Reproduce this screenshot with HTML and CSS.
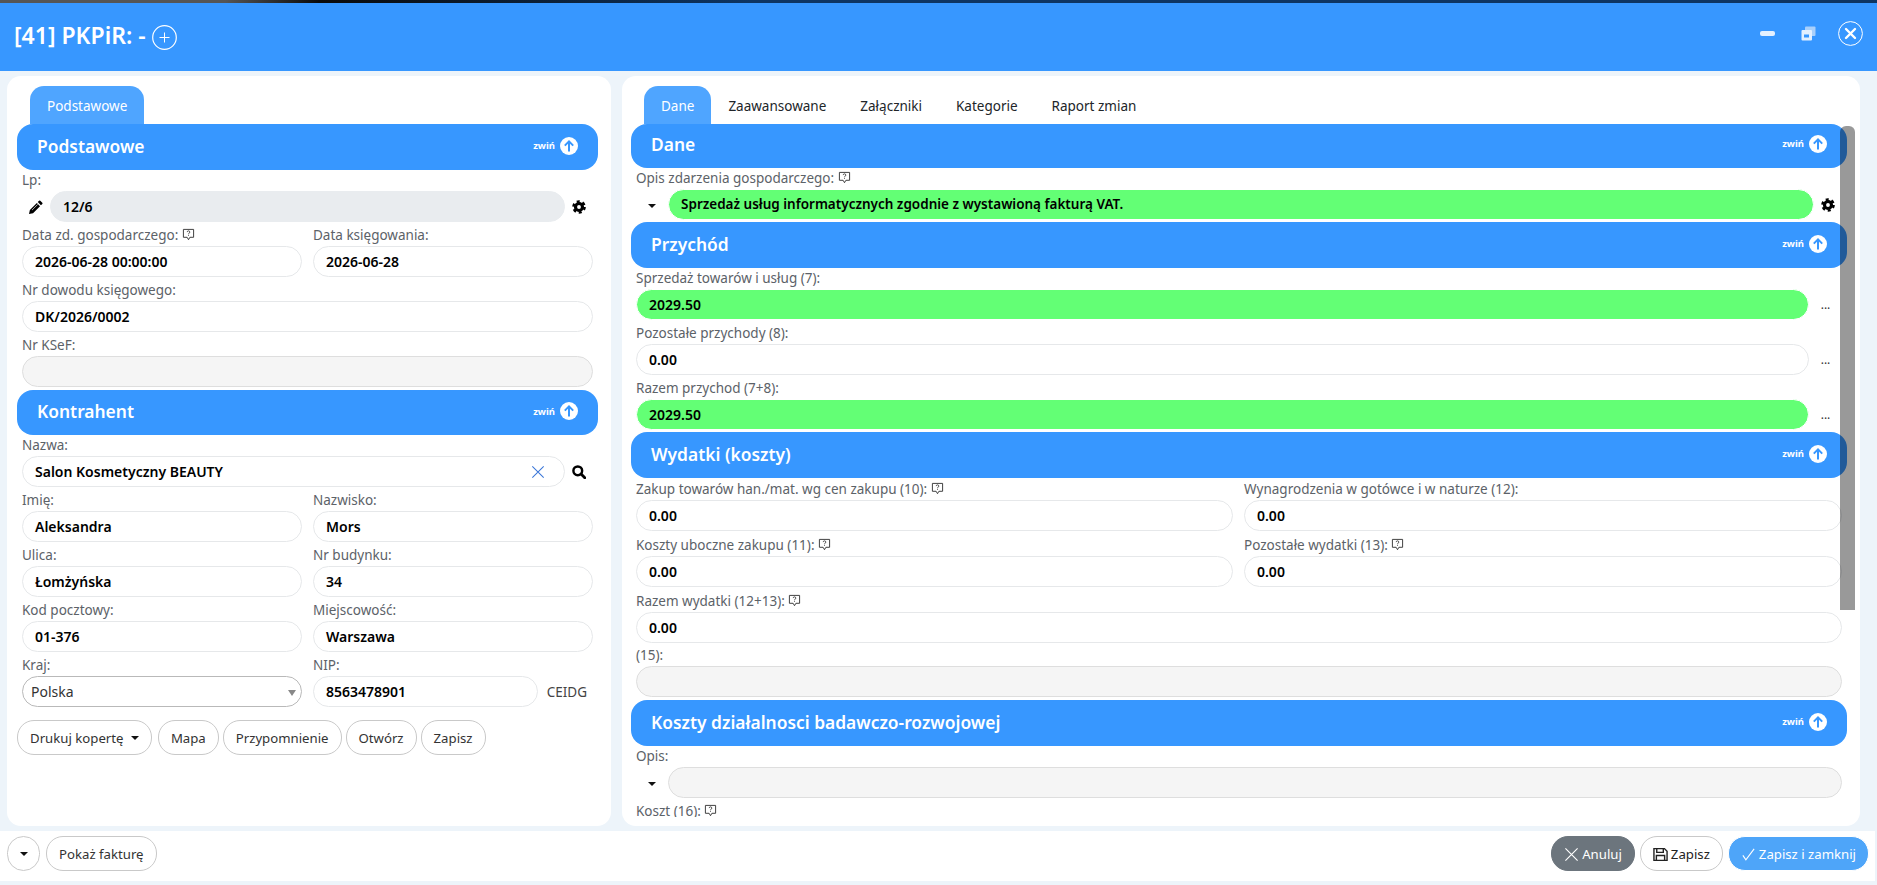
FILE: index.html
```html
<!DOCTYPE html>
<html>
<head>
  <meta charset="utf-8">
  <meta name="viewport" content="width=device-width, initial-scale=1.0">
  <title>PKPiR</title>
  <link rel="stylesheet" href="styles.css">
</head>
<body>
  <!-- ICONS -->
  <svg class="defs" width="0" height="0">
    <symbol id="i-gear" viewBox="0 0 16 16">
      <circle cx="8" cy="8" r="4" fill="none" stroke="currentColor" stroke-width="3.6"/>
      <circle cx="8" cy="8" r="6.4" fill="none" stroke="currentColor" stroke-width="2.8" stroke-dasharray="3.4 3.3"/>
    </symbol>
    <symbol id="i-pencil" viewBox="0 0 16 16">
      <path fill="currentColor" d="M11.5.8a1 1 0 0 1 1.4 0l2.3 2.3a1 1 0 0 1 0 1.4L13.6 6 10 2.4zM9 3.4L12.6 7l-8 8L0 16l1-4.6z"/>
      <path fill="none" stroke="#fff" stroke-width=".8" d="M3.4 11.6L10 5"/>
    </symbol>
    <symbol id="i-search" viewBox="0 0 16 16">
      <circle cx="6.6" cy="6.6" r="5" fill="none" stroke="currentColor" stroke-width="2.8"/>
      <path d="M10.4 10.4l4.2 4.2" stroke="currentColor" stroke-width="3.2" stroke-linecap="round"/>
    </symbol>
    <symbol id="i-note" viewBox="0 0 14 14">
      <path fill="none" stroke="currentColor" d="M1.5 1.5h11v8.5h-4l-1.5 2.6-1.5-2.6h-4z"/>
      <path fill="none" stroke="currentColor" stroke-width=".9" d="M5.6 4.4a1.4 1.4 0 1 1 1.8 1.4c-.3.1-.4.3-.4.8"/>
      <path stroke="currentColor" stroke-width=".9" d="M7 7.4v1"/>
    </symbol>
    <symbol id="i-up" viewBox="0 0 18 18">
      <circle cx="9" cy="9" r="9" fill="#fff"/>
      <path fill="none" stroke="#3797ff" stroke-width="2" d="M9 14.5V4.5M4.8 8.6L9 4.4l4.2 4.2"/>
    </symbol>
    <symbol id="i-x" viewBox="0 0 16 16">
      <path fill="none" stroke="currentColor" stroke-width="1.2" d="M1.5 1.5l13 13M14.5 1.5l-13 13"/>
    </symbol>
  </svg>

  <div class="top-strip"></div>

  <!-- NAGLOWEK -->
  <header class="top-bar">
    <h1 class="top-title">[41] PKPiR: -</h1>
    <svg class="top-plus" width="25" height="25" viewBox="0 0 25 25">
      <circle cx="12.5" cy="12.5" r="11.8" fill="none" stroke="#fff" stroke-width="1.2"/>
      <path d="M12.5 7.5v10M7.5 12.5h10" stroke="#fff"/>
    </svg>
    <div class="top-actions">
      <span class="win-min"></span>
      <svg class="win-restore" width="15" height="15" viewBox="0 0 15 15">
        <rect x="4" y="0.5" width="10.5" height="9.5" rx="1" fill="#a9d0fb"/>
        <rect x="0.5" y="4" width="10.5" height="10.5" rx="1" fill="#e3f0ff"/>
        <rect x="3" y="8.5" width="5" height="3" fill="#3797ff"/>
      </svg>
      <svg class="win-close" width="25" height="25" viewBox="0 0 25 25">
        <circle cx="12.5" cy="12.5" r="11.9" fill="none" stroke="#fff"/>
        <path d="M8 8l9 9M17 8l-9 9" stroke="#fff" stroke-width="2.4" stroke-linecap="round"/>
      </svg>
    </div>
  </header>

  <main class="panes">
    <!-- LEWA KOLUMNA -->
    <section class="card card-left">
      <nav class="tabs">
        <a class="tab active">Podstawowe</a>
      </nav>

      <div class="sec-head">
        <h2>Podstawowe</h2>
        <span class="collapse">zwiń <svg width="18" height="18"><use href="#i-up"/></svg></span>
      </div>
      <div class="sec-body">
        <div class="field">
          <label>Lp:</label>
          <div class="with-icons">
            <svg class="ico pencil"><use href="#i-pencil"/></svg>
            <div class="input locked">12/6</div>
            <svg class="ico gear"><use href="#i-gear"/></svg>
          </div>
        </div>
        <div class="cols">
          <div class="field">
            <label>Data zd. gospodarczego: <svg class="note"><use href="#i-note"/></svg></label>
            <div class="input">2026-06-28 00:00:00</div>
          </div>
          <div class="field">
            <label>Data księgowania:</label>
            <div class="input">2026-06-28</div>
          </div>
        </div>
        <div class="field">
          <label>Nr dowodu księgowego:</label>
          <div class="input">DK/2026/0002</div>
        </div>
        <div class="field">
          <label>Nr KSeF:</label>
          <div class="input empty"></div>
        </div>
      </div>

      <div class="sec-head">
        <h2>Kontrahent</h2>
        <span class="collapse">zwiń <svg width="18" height="18"><use href="#i-up"/></svg></span>
      </div>
      <div class="sec-body">
        <div class="field">
          <label>Nazwa:</label>
          <div class="with-icons">
            <div class="input has-clear">Salon Kosmetyczny BEAUTY
              <svg class="clear"><use href="#i-x"/></svg>
            </div>
            <svg class="ico gear"><use href="#i-search"/></svg>
          </div>
        </div>
        <div class="cols">
          <div class="field"><label>Imię:</label><div class="input">Aleksandra</div></div>
          <div class="field"><label>Nazwisko:</label><div class="input">Mors</div></div>
          <div class="field"><label>Ulica:</label><div class="input">Łomżyńska</div></div>
          <div class="field"><label>Nr budynku:</label><div class="input">34</div></div>
          <div class="field"><label>Kod pocztowy:</label><div class="input">01-376</div></div>
          <div class="field"><label>Miejscowość:</label><div class="input">Warszawa</div></div>
          <div class="field">
            <label>Kraj:</label>
            <div class="input select">Polska<span class="select-arrow"></span></div>
          </div>
          <div class="field">
            <label>NIP:</label>
            <div class="with-link">
              <div class="input">8563478901</div>
              <a class="link-ceidg">CEIDG</a>
            </div>
          </div>
        </div>
        <div class="btn-row">
          <button class="btn btn-drop">Drukuj kopertę <span class="caret"></span></button>
          <button class="btn">Mapa</button>
          <button class="btn">Przypomnienie</button>
          <button class="btn">Otwórz</button>
          <button class="btn">Zapisz</button>
        </div>
      </div>
    </section>

    <!-- PRAWA KOLUMNA -->
    <section class="card card-right">
      <nav class="tabs">
        <a class="tab active">Dane</a>
        <a class="tab">Zaawansowane</a>
        <a class="tab">Załączniki</a>
        <a class="tab">Kategorie</a>
        <a class="tab">Raport zmian</a>
      </nav>
      <div class="scroll-thumb"></div>

      <div class="scroll-area">
        <div class="sec-head head-dane">
          <h2>Dane</h2>
          <span class="collapse">zwiń <svg width="18" height="18"><use href="#i-up"/></svg></span>
        </div>
        <div class="sec-body">
          <div class="field field-last">
            <label>Opis zdarzenia gospodarczego: <svg class="note"><use href="#i-note"/></svg></label>
            <div class="with-icons">
              <span class="caret-box"><span class="caret"></span></span>
              <div class="input green desc">Sprzedaż usług informatycznych zgodnie z wystawioną fakturą VAT.</div>
              <svg class="ico gear"><use href="#i-gear"/></svg>
            </div>
          </div>
        </div>

        <div class="sec-head">
          <h2>Przychód</h2>
          <span class="collapse">zwiń <svg width="18" height="18"><use href="#i-up"/></svg></span>
        </div>
        <div class="sec-body">
          <div class="field">
            <label>Sprzedaż towarów i usług (7):</label>
            <div class="with-dots"><div class="input green">2029.50</div><span class="dots">...</span></div>
          </div>
          <div class="field">
            <label>Pozostałe przychody (8):</label>
            <div class="with-dots"><div class="input">0.00</div><span class="dots">...</span></div>
          </div>
          <div class="field field-last">
            <label>Razem przychod (7+8):</label>
            <div class="with-dots"><div class="input green">2029.50</div><span class="dots">...</span></div>
          </div>
        </div>

        <div class="sec-head">
          <h2>Wydatki (koszty)</h2>
          <span class="collapse">zwiń <svg width="18" height="18"><use href="#i-up"/></svg></span>
        </div>
        <div class="sec-body tall-labels">
          <div class="cols cols-wide">
            <div class="field">
              <label>Zakup towarów han./mat. wg cen zakupu (10): <svg class="note"><use href="#i-note"/></svg></label>
              <div class="input">0.00</div>
            </div>
            <div class="field">
              <label>Wynagrodzenia w gotówce i w naturze (12):</label>
              <div class="input">0.00</div>
            </div>
            <div class="field">
              <label>Koszty uboczne zakupu (11): <svg class="note"><use href="#i-note"/></svg></label>
              <div class="input">0.00</div>
            </div>
            <div class="field">
              <label>Pozostałe wydatki (13): <svg class="note"><use href="#i-note"/></svg></label>
              <div class="input">0.00</div>
            </div>
          </div>
          <div class="field field-short">
            <label>Razem wydatki (12+13): <svg class="note"><use href="#i-note"/></svg></label>
            <div class="input">0.00</div>
          </div>
          <div class="field">
            <label>(15):</label>
            <div class="input empty"></div>
          </div>
        </div>

        <div class="sec-head">
          <h2>Koszty działalnosci badawczo-rozwojowej</h2>
          <span class="collapse">zwiń <svg width="18" height="18"><use href="#i-up"/></svg></span>
        </div>
        <div class="sec-body">
          <div class="field">
            <label>Opis:</label>
            <div class="with-icons">
              <span class="caret-box"><span class="caret"></span></span>
              <div class="input empty"></div>
            </div>
          </div>
          <div class="field">
            <label>Koszt (16): <svg class="note"><use href="#i-note"/></svg></label>
          </div>
        </div>
      </div>
    </section>
  </main>

  <!-- STOPKA -->
  <footer class="bottom-bar">
    <button class="btn btn-square"><span class="caret"></span></button>
    <button class="btn">Pokaż fakturę</button>
    <div class="bottom-right">
      <button class="btn btn-grey"><svg class="btn-ico"><use href="#i-x"/></svg>Anuluj</button>
      <button class="btn btn-save">
        <svg class="btn-ico" viewBox="0 0 16 16"><path fill="none" stroke="currentColor" stroke-width="1.5" d="M1 1.7h11.2l2.8 2.8v9.8H1z"/><path fill="none" stroke="currentColor" stroke-width="1.5" d="M4 1.7v4h7v-4M3.6 14.3V9h8.8v5.3"/></svg>Zapisz
      </button>
      <button class="btn btn-blue">
        <svg class="btn-ico" viewBox="0 0 16 16"><path fill="none" stroke="currentColor" stroke-width="1.2" d="M2 9l3.2 4.6L14 2"/></svg>Zapisz i zamknij
      </button>
    </div>
  </footer>
</body>
</html>
```

FILE: styles.css
```css
/* OGOLNE */
* { box-sizing: border-box; }

body {
  margin: 0;
  height: 885px;
  overflow: hidden;
  display: flex;
  flex-direction: column;
  background: #edf4fa;
  font-family: "Noto Sans", "Liberation Sans", sans-serif;
  font-size: 14px;
  color: #212529;
}

.defs { position: absolute; }

.top-strip {
  height: 3px;
  background: linear-gradient(90deg, #555 0, #555 12%, #0a0a0a 17%, #0d3563 40%, #0d3563 100%);
}

/* NAGLOWEK */
.top-bar {
  height: 68px;
  display: flex;
  align-items: center;
  padding: 0 14px 4px;
  background: #3797ff;
  color: #fff;
}

.top-title {
  margin: 0;
  font-size: 23px;
  font-weight: 600;
}

.top-plus { margin: 4px 0 0 6px; }

.top-actions {
  margin-left: auto;
  display: flex;
  align-items: center;
  padding-bottom: 4px;
}

.win-min {
  width: 15px;
  height: 5px;
  border-radius: 2px;
  background: #e3f0ff;
  margin-right: 26px;
}

.win-close { margin-left: 22px; }

/* KOLUMNY */
.panes {
  height: 750px;
  margin-top: 5px;
  padding: 0 17px 0 7px;
  display: flex;
  gap: 11px;
}

.card {
  position: relative;
  height: 100%;
  padding-top: 10px;
  background: #fff;
  border-radius: 14px;
  display: flex;
  flex-direction: column;
}

.card-left {
  width: 604px;
  padding-left: 10px;
  padding-right: 13px;
}

.card-right {
  flex: 1;
  padding-left: 9px;
  padding-right: 13px;
  padding-bottom: 9px;
}

.scroll-area {
  flex: 1;
  overflow: hidden;
}

.scroll-thumb {
  position: absolute;
  z-index: 2;
  left: 1218px;
  top: 50px;
  width: 15px;
  height: 484px;
  border-radius: 6px 6px 0 0;
  background: rgba(0, 0, 0, 0.4);
}

/* ZAKLADKI */
.tabs {
  height: 38px;
  flex: none;
  display: flex;
  margin-left: 13px;
}

.tab {
  padding: 0 17px;
  line-height: 40px;
  font-size: 13.5px;
  color: #212529;
}

.tab.active {
  background: #4fa5ff;
  color: #fff;
  border-radius: 14px 14px 0 0;
}

/* SEKCJE */
.sec-head {
  height: 46px;
  padding: 0 20px 3px;
  display: flex;
  align-items: center;
  justify-content: space-between;
  background: #3797ff;
  color: #fff;
  border-radius: 16px;
}

.card-left .sec-head + .sec-body + .sec-head { height: 45px; }

.head-dane { height: 44px; padding-bottom: 5px; }

.sec-head h2 {
  margin: 0;
  font-size: 17.4px;
  font-weight: 600;
}

.collapse {
  display: flex;
  align-items: center;
  gap: 5px;
  font-size: 9.5px;
  font-weight: 700;
}

.sec-body { padding: 0 5px; }

/* POLA */
.field { margin-bottom: 3px; min-width: 0; }
.field-last { margin-bottom: 2px; }
.field-short { margin-bottom: 2px; }

.field label {
  display: block;
  height: 21px;
  line-height: 21px;
  font-size: 13.5px;
  color: #5c6268;
  white-space: nowrap;
}

.tall-labels .cols-wide label,
.tall-labels .field-short label { height: 22px; line-height: 22px; }

.note {
  width: 13px;
  height: 13px;
  vertical-align: -1px;
  color: #333;
}

.input {
  height: 31px;
  line-height: 29px;
  padding: 0 12px;
  flex: 1;
  min-width: 0;
  border: 1px solid #e6e8ea;
  border-radius: 16px;
  background: #fff;
  color: #000;
  font-size: 14px;
  font-weight: 600;
  white-space: nowrap;
}

.input.locked { background: #e9ecef; border-color: #e9ecef; }
.input.empty { background: #f5f5f5; border-color: #dedede; }
.input.green { background: #63ff75; border-color: #fff; }
.input.desc { font-size: 13.5px; }

.input.has-clear {
  position: relative;
}

.clear {
  position: absolute;
  right: 19px;
  top: 8px;
  width: 14px;
  height: 14px;
  color: #3a76d8;
}

.input.select {
  position: relative;
  padding-left: 8px;
  border-color: #b9b9b9;
  font-weight: 400;
  color: #333;
}

.select-arrow {
  position: absolute;
  right: 5px;
  top: 13px;
  border-top: 6px solid #888;
  border-left: 4px solid transparent;
  border-right: 4px solid transparent;
}

.cols {
  display: grid;
  grid-template-columns: 280px 280px;
  column-gap: 11px;
}

.cols-wide {
  grid-template-columns: 597px 1fr;
}

.with-icons {
  display: flex;
  align-items: center;
}

.with-dots {
  display: flex;
  align-items: center;
}

.with-link {
  display: flex;
  align-items: center;
}

.link-ceidg {
  width: 55px;
  flex: none;
  text-align: right;
  padding-right: 6px;
  font-size: 13.5px;
  color: #444;
}

.dots {
  width: 33px;
  flex: none;
  text-align: center;
  font-size: 12px;
  color: #333;
}

.ico {
  width: 14px;
  height: 14px;
  flex: none;
  color: #000;
}

.pencil { margin: 0 7px; }
.gear { margin: 0 7px; }

.caret-box {
  width: 32px;
  flex: none;
  text-align: center;
}

.caret {
  display: inline-block;
  vertical-align: 2px;
  border-top: 4px solid #111;
  border-left: 4px solid transparent;
  border-right: 4px solid transparent;
}

/* PRZYCISKI */
.btn-row {
  display: flex;
  gap: 4px;
  margin: 10px 0 0 -5px;
}

.btn {
  height: 35px;
  padding: 0 12px;
  border: 1px solid #c9c9c9;
  border-radius: 17px;
  background: #fff;
  color: #333;
  font-family: inherit;
  font-size: 13.2px;
  white-space: nowrap;
}

.btn-drop { margin-right: 2px; }
.btn-drop .caret { margin-left: 4px; vertical-align: 3px; }

/* STOPKA */
.bottom-bar {
  height: 50px;
  margin: 5px 2px 0 0;
  padding: 5px 6px 0 7px;
  display: flex;
  gap: 6px;
  background: #fff;
}

.bottom-right {
  margin-left: auto;
  display: flex;
  gap: 5px;
}

.btn-square { width: 33px; padding: 0; }
.btn-square .caret { vertical-align: 3px; }

.btn-ico {
  width: 15px;
  height: 15px;
  margin-right: 3px;
  vertical-align: -3px;
}

.btn-grey { background: #6c757d; border-color: #6c757d; color: #fff; }
.btn-save { color: #222; }
.btn-blue { background: #4ea5f9; border-color: #fff; color: #fff; }
```
